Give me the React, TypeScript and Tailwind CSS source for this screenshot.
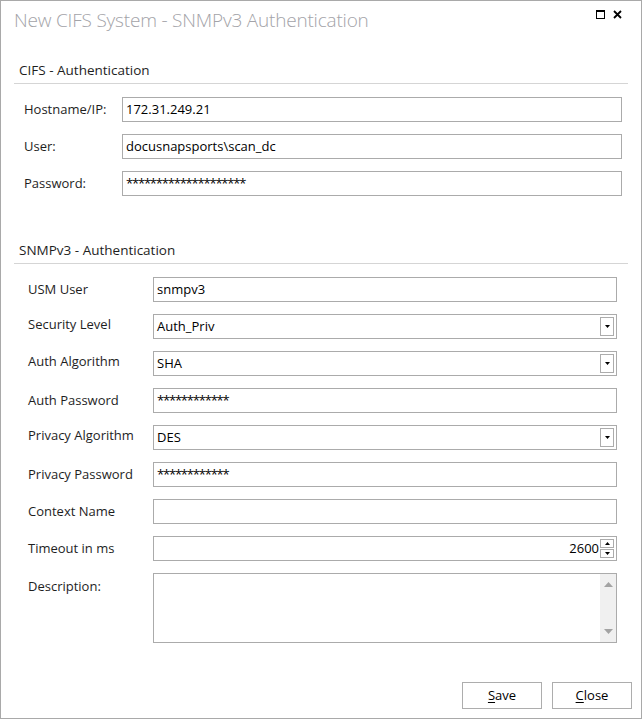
const font = { fontFamily: '"Open Sans", "Noto Sans", sans-serif' }

const DropBtn = () => (
  <div className="absolute right-[2px] top-[2px] bottom-[2px] w-[14px] border border-[#acacac] bg-white flex items-center justify-center">
    <svg width="5" height="3" viewBox="0 0 5 3"><path d="M0 0h5L2.5 3z" fill="#000" /></svg>
  </div>
)

const Field = ({ value, drop, secret }: { value?: string; drop?: boolean; secret?: boolean }) => (
  <div className="relative h-[25px] border border-[#ababab] bg-white flex items-center pl-[3px] text-[13px] text-[#000]">
    <span className={secret ? 'tracking-[-1.2px]' : ''}>{value}</span>
    {drop && <DropBtn />}
  </div>
)

const cifs = [
  { label: 'Hostname/IP:', value: '172.31.249.21' },
  { label: 'User:', value: 'docusnapsports\\scan_dc' },
  { label: 'Password:', value: '********************', secret: true },
]

const snmp = [
  { label: 'USM User', value: 'snmpv3' },
  { label: 'Security Level', value: 'Auth_Priv', drop: true },
  { label: 'Auth Algorithm', value: 'SHA', drop: true },
  { label: 'Auth Password', value: '************', secret: true },
  { label: 'Privacy Algorithm', value: 'DES', drop: true },
  { label: 'Privacy Password', value: '************', secret: true },
  { label: 'Context Name', value: '' },
]

export default function App() {
  return (
    <div className="w-[643px] h-[720px] bg-white" style={font}>
      <div className="w-[642px] h-[719px] border border-[#a9a9a9] flex flex-col text-[#1e1e1e]">
        {/* title bar */}
        <div className="flex items-start pt-[6px] pl-[13px] pr-[19px]">
          <div className="flex-1 text-[19px] leading-[26px] font-light tracking-[-0.2px] text-[#a3a3a8]">New CIFS System - SNMPv3 Authentication</div>
          <div className="flex items-center gap-[8px] pt-[3px]">
            <svg width="9" height="9" viewBox="0 0 9 9">
              <rect x="0.5" y="0.5" width="8" height="8" fill="none" stroke="#000" />
              <rect x="0" y="0" width="9" height="2" fill="#000" />
            </svg>
            <svg width="9" height="9" viewBox="0 0 9 9">
              <path d="M1 1L8 8M8 1L1 8" stroke="#000" strokeWidth="1.8" />
            </svg>
          </div>
        </div>

        {/* CIFS section */}
        <div className="mt-[27px] mx-[13px] border-b border-[#d5d5d5] pb-[3px] pl-[5px] text-[13.5px] leading-[20px]">
          CIFS - Authentication
        </div>
        <div className="mt-[13px] flex flex-col gap-[12px] pl-[23px] pr-[19px]">
          {cifs.map((r) => (
            <div key={r.label} className="grid grid-cols-[98px_1fr] items-center">
              <span className="text-[13px]">{r.label}</span>
              <Field value={r.value} secret={r.secret} />
            </div>
          ))}
        </div>

        {/* SNMPv3 section */}
        <div className="mt-[44px] mx-[13px] border-b border-[#d5d5d5] pb-[3px] pl-[5px] text-[13.5px] leading-[20px]">
          SNMPv3 - Authentication
        </div>
        <div className="mt-[13px] flex flex-col gap-[12px] pl-[27px] pr-[24px]">
          {snmp.map((r) => (
            <div key={r.label} className="grid grid-cols-[125px_1fr] items-center">
              <span className={r.drop ? 'text-[13px] -mt-[4px]' : 'text-[13px]'}>{r.label}</span>
              <Field value={r.value} drop={r.drop} secret={r.secret} />
            </div>
          ))}
          <div className="grid grid-cols-[125px_1fr] items-center">
            <span className="text-[13px]">Timeout in ms</span>
            <div className="relative h-[25px] border border-[#ababab] bg-white flex items-center justify-end pr-[17px] text-[13px] text-black">
              <span>2600</span>
              <div className="absolute right-[2px] top-[2px] bottom-[2px] w-[14px] flex flex-col gap-[1px]">
                <div className="flex-1 border border-[#acacac] flex items-center justify-center">
                  <svg width="5" height="3" viewBox="0 0 5 3"><path d="M0 3h5L2.5 0z" fill="#000" /></svg>
                </div>
                <div className="flex-1 border border-[#acacac] flex items-center justify-center">
                  <svg width="5" height="3" viewBox="0 0 5 3"><path d="M0 0h5L2.5 3z" fill="#000" /></svg>
                </div>
              </div>
            </div>
          </div>
          <div className="grid grid-cols-[125px_1fr] items-start">
            <span className="text-[13px] leading-[18px] pt-[4px]">Description:</span>
            <div className="h-[70px] border border-[#ababab] bg-white flex justify-end">
              <div className="w-[16px] bg-[#f0f0f0] flex flex-col items-center justify-between py-[8px]">
                <svg width="9" height="5" viewBox="0 0 9 5"><path d="M0 5h9L4.5 0z" fill="#a3a3a3" /></svg>
                <svg width="9" height="5" viewBox="0 0 9 5"><path d="M0 0h9L4.5 5z" fill="#a3a3a3" /></svg>
              </div>
            </div>
          </div>
        </div>

        {/* buttons */}
        <div className="mt-[39px] flex justify-end gap-[10px] pr-[9px]">
          <button className="w-[80px] h-[27px] border border-[#adadad] bg-white text-[13px] text-black">
            <span className="underline underline-offset-2">S</span>ave
          </button>
          <button className="w-[80px] h-[27px] border border-[#adadad] bg-white text-[13px] text-black">
            <span className="underline underline-offset-2">C</span>lose
          </button>
        </div>
      </div>
    </div>
  )
}
